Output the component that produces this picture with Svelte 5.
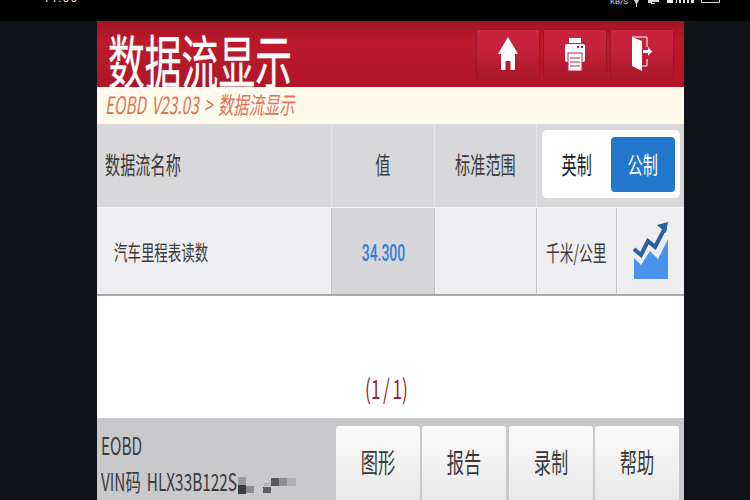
<script>
  const buttons = ['图形', '报告', '录制', '帮助'];
</script>

<div class="page">
  <div class="status">
    <span class="time">11:06</span>
    <span class="status-right">
      <span class="kbs">KB/S</span>
      <svg width="90" height="8" viewBox="0 0 90 8">
        <path d="M4 0h5L7 4v3H6V4z" fill="#ddd" />
        <path d="M18 0h11v2H22v1h-4zM21 3h4v1h-4z" fill="#ddd" />
        <rect x="37" y="0" width="6" height="3" fill="#eee" />
        <path d="M46 0h1v3h-1zM49 0h2v3h-2zM53 0h2v3h-2zM57 0h2v3h-2zM61 0h3v3h-3z" fill="#ddd" />
        <path d="M71.500 0v2.500h18V0" fill="none" stroke="#ddd" />
      </svg>
    </span>
  </div>

  <div class="screen">
    <div class="side"></div>
    <div class="app">
      <header class="titlebar">
        <h1><span class="squeeze left">数据流显示</span></h1>
        <div class="tools">
          <button class="tool" aria-label="主页">
            <svg width="24" height="36" viewBox="0 0 24 36">
              <path d="M12 1L22 18H19V34H14.500V25H9.500V34H5V18H2z" fill="#fff" />
            </svg>
          </button>
          <button class="tool" aria-label="打印">
            <svg width="24" height="36" viewBox="0 0 24 36">
              <rect x="6" y="2" width="12" height="5" fill="#fff" />
              <rect x="2" y="8" width="20" height="18" rx="2" fill="#fff" />
              <rect x="14" y="10" width="2" height="2" fill="#c4203a" />
              <rect x="18" y="10" width="2" height="2" fill="#c4203a" />
              <rect x="5" y="17" width="14" height="18" fill="#fff" stroke="#c4203a" />
              <path d="M7 22h10M7 26h10M7 30h10" stroke="#c4203a" fill="none" />
            </svg>
          </button>
          <button class="tool" aria-label="退出">
            <svg width="24" height="36" viewBox="0 0 24 36">
              <path d="M2 1L12 5V35L2 30z" fill="#fff" />
              <path d="M2 1H17V11M17 23V30H12" fill="none" stroke="#fff" />
              <path d="M13 14H18V11L22 15.500L18 20V17H13z" fill="#fff" />
            </svg>
          </button>
        </div>
      </header>

      <div class="crumb"><span class="squeeze left">EOBD V23.03 &gt; 数据流显示</span></div>

      <div class="thead">
        <div class="cell name-head"><span class="squeeze left">数据流名称</span></div>
        <div class="cell"><span class="squeeze">值</span></div>
        <div class="cell"><span class="squeeze">标准范围</span></div>
        <div class="units">
          <div class="unit-box">
            <span class="unit"><span class="squeeze">英制</span></span>
            <span class="unit active"><span class="squeeze">公制</span></span>
          </div>
        </div>
      </div>

      <div class="row">
        <div class="td name"><span class="squeeze left">汽车里程表读数</span></div>
        <div class="td value"><span class="squeeze">34.300</span></div>
        <div class="td"></div>
        <div class="td unit-cell"><span class="squeeze">千米/公里</span></div>
        <div class="td chart">
          <svg width="38" height="62" viewBox="632 222 38 62">
            <path d="M634 260L641 267L650 253L658 261L668 241V281H634z" fill="#4a94ee" />
            <path d="M634 251L641 257L648 243L655 249L665 230" fill="none" stroke="#2b5f9f" stroke-width="4" />
            <path d="M668 224L657 227L666 235z" fill="#2b5f9f" />
          </svg>
        </div>
      </div>

      <div class="pager"><span class="squeeze">(1 / 1)</span></div>

      <footer class="bottom">
        <div class="info">
          <div class="line"><span class="squeeze left">EOBD</span></div>
          <div class="line vin">
            <span class="squeeze left">VIN码 HLX33B122S</span>
            <svg class="mosaic" width="60" height="18" viewBox="0 0 60 18" aria-hidden="true">
              <rect x="0" y="0" width="8" height="8" fill="#9b9b9d" />
              <rect x="0" y="8" width="8" height="9" fill="#3c3c3e" />
              <rect x="8" y="9" width="8" height="7" fill="#8b8b8d" />
              <rect x="25" y="10" width="8" height="6" fill="#5f5f61" />
              <rect x="33" y="1" width="8" height="8" fill="#5a5a5c" />
              <rect x="41" y="1" width="8" height="8" fill="#8f8f91" />
              <rect x="49" y="1" width="9" height="8" fill="#b0b0b2" />
              <rect x="26" y="6" width="7" height="3" fill="#b5b5b7" />
            </svg>
          </div>
        </div>
        <div class="actions">
          {#each buttons as label}
            <button class="action"><span class="squeeze">{label}</span></button>
          {/each}
        </div>
      </footer>
    </div>
    <div class="side"></div>
  </div>
</div>

<style>
  :global(body) {
    margin: 0;
    background: #000;
    overflow: hidden;
  }

  .page {
    width: 750px;
    height: 500px;
    display: flex;
    flex-direction: column;
    overflow: hidden;
    font-family: "Noto Sans CJK SC", "Noto Sans", sans-serif;
    color: #3a3a3c;
  }

  .squeeze {
    display: inline-block;
    white-space: nowrap;
    transform: scaleX(0.64);
  }

  .squeeze.left {
    transform-origin: left center;
  }

  .status {
    height: 21px;
    flex: none;
    background: #000;
    display: flex;
    justify-content: space-between;
    overflow: hidden;
    color: #ddd;
  }

  .time {
    font: 12px/12px "Roboto", sans-serif;
    margin: -8px 0 0 43px;
    letter-spacing: 1px;
  }

  .status-right {
    display: flex;
    align-items: flex-start;
    gap: 2px;
    margin-right: 30px;
  }

  .kbs {
    font: 8px/8px "Roboto", sans-serif;
    margin-top: -2px;
  }

  .screen {
    flex: 1;
    min-height: 0;
    display: grid;
    grid-template-columns: 97px 587px 1fr;
  }

  .side {
    background: #0f1218;
  }

  .app {
    background: #fff;
    display: flex;
    flex-direction: column;
    min-height: 0;
    overflow: hidden;
  }

  .titlebar {
    height: 66px;
    flex: none;
    display: flex;
    justify-content: space-between;
    background: linear-gradient(#9e1421 0%, #bd1a2c 30%, #b01628 100%);
    overflow: hidden;
  }

  h1 {
    margin: 0 0 0 11px;
    font-size: 57.500px;
    font-weight: 400;
    line-height: 66px;
    color: #fff;
    padding-top: 5px;
    -webkit-text-stroke: 0.4px #fff;
  }

  .tools {
    display: flex;
    gap: 3px;
    padding: 8px 10px 0 0;
  }

  .tool {
    width: 64px;
    height: 50px;
    padding: 0;
    border: 1px solid #a01424;
    background: linear-gradient(#cb2440 0%, #c4213a 45%, #a91627 100%);
    display: flex;
    align-items: center;
    justify-content: center;
  }

  .crumb {
    height: 37px;
    flex: none;
    box-sizing: border-box;
    background: #fefaec;
    color: #e2725b;
    font-size: 24px;
    font-style: italic;
    word-spacing: 3px;
    line-height: 34px;
    padding-left: 8px;
    overflow: hidden;
  }

  .thead,
  .row {
    display: grid;
    grid-template-columns: 235px 103px 102px 80px 67px;
    flex: none;
  }

  .thead {
    grid-template-columns: 235px 103px 102px 147px;
    height: 84px;
    background: #d8d8da;
    border-bottom: 1px solid #f4f4f5;
    box-sizing: border-box;
    font-size: 23.700px;
  }

  .cell {
    display: flex;
    align-items: center;
    justify-content: center;
    padding-bottom: 4px;
    box-sizing: border-box;
    border-right: 1px solid #e6e6e8;
  }

  .name-head {
    justify-content: flex-start;
    padding-left: 8px;
  }

  .units {
    padding: 6px 4px 9px 5px;
  }

  .unit-box {
    height: 100%;
    box-sizing: border-box;
    background: #fff;
    border-radius: 5px;
    padding: 7px 5px 6px 0;
    display: grid;
    grid-template-columns: 1fr 64px;
  }

  .unit {
    display: flex;
    align-items: center;
    justify-content: center;
    color: #222;
    border-radius: 4px;
    padding-bottom: 2px;
  }

  .unit.active {
    background: #2277cc;
    color: #fff;
  }

  .row {
    height: 88px;
    background: #eeeef0;
    border-bottom: 2px solid #a9a9ab;
    box-sizing: border-box;
    font-size: 21px;
  }

  .td {
    display: flex;
    align-items: center;
    justify-content: center;
    border-right: 1px solid #c6c6c8;
  }

  .td.name {
    justify-content: flex-start;
    padding-left: 17px;
  }

  .td.value {
    background: #d6d6d8;
    color: #2f7fd8;
    font-size: 24px;
    font-weight: 500;
    padding-top: 3px;
    font-family: "Roboto", sans-serif;
  }

  .td.value .squeeze {
    transform: scaleX(0.58);
  }

  .td.unit-cell {
    font-size: 21.500px;
  }

  .td.chart {
    border-right: 0;
  }

  .pager {
    flex: 1;
    display: flex;
    align-items: flex-end;
    justify-content: center;
    color: #8e2a3c;
    font-size: 27px;
    padding-bottom: 11px;
    padding-right: 8px;
    word-spacing: -2px;
  }

  .bottom {
    height: 82px;
    flex: none;
    background: #c9c9cb;
    display: flex;
    justify-content: space-between;
    overflow: hidden;
  }

  .info {
    padding: 9px 0 0 4px;
    font-size: 24px;
    line-height: 36px;
  }

  .line {
    display: flex;
    align-items: center;
    height: 36px;
  }

  .vin {
    position: relative;
    word-spacing: 4px;
  }

  .mosaic {
    position: absolute;
    left: 137px;
    top: 14px;
  }

  .actions {
    display: flex;
    gap: 2.330px;
    padding: 8px 5px 0 0;
  }

  .action {
    width: 84px;
    height: 84px;
    padding: 0 0 14px 0;
    border: 0;
    border-radius: 3px 3px 0 0;
    background: linear-gradient(#fbfbfb, #e6e6e8);
    font: inherit;
    font-size: 27px;
    color: #3a3a3c;
  }
</style>
